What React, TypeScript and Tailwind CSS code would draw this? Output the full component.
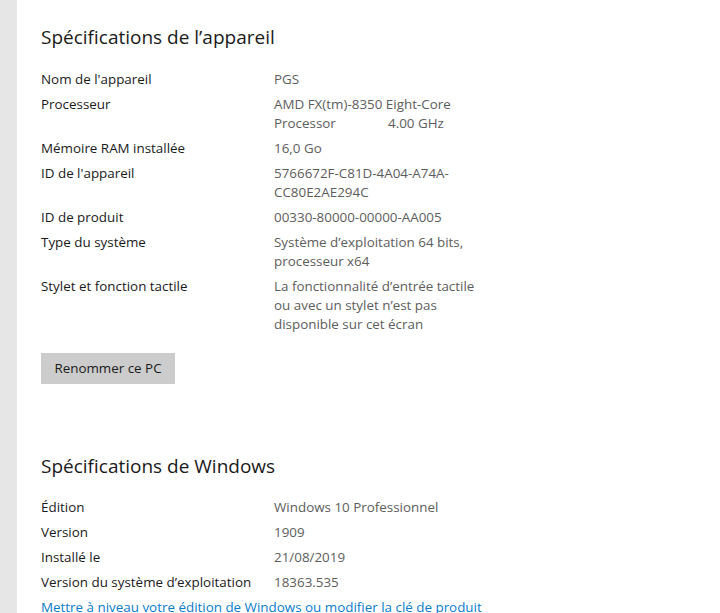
const deviceSpecs: [string, string][] = [
  ["Nom de l'appareil", "PGS"],
  ["Processeur", "AMD FX(tm)-8350 Eight-Core Processor               4.00 GHz"],
  ["Mémoire RAM installée", "16,0 Go"],
  ["ID de l'appareil", "5766672F-C81D-4A04-A74A-CC80E2AE294C"],
  ["ID de produit", "00330-80000-00000-AA005"],
  ["Type du système", "Système d’exploitation 64 bits, processeur x64"],
  ["Stylet et fonction tactile", "La fonctionnalité d’entrée tactile ou avec un stylet n’est pas disponible sur cet écran"],
]

const windowsSpecs: [string, string][] = [
  ["Édition", "Windows 10 Professionnel"],
  ["Version", "1909"],
  ["Installé le", "21/08/2019"],
  ["Version du système d’exploitation", "18363.535"],
]

const SpecList = ({ rows }: { rows: [string, string][] }) => (
  <div className="grid grid-cols-[233px_202px] gap-y-[6px] text-[13.4px] leading-[19px]">
    {rows.map(([label, value]) => (
      <div key={label} className="contents">
        <div className="text-[#1a1a1a]">{label}</div>
        <div className="text-[#5d5d5d] whitespace-pre-wrap break-words">{value}</div>
      </div>
    ))}
  </div>
)

export default function App() {
  return (
    <div
      className="w-[720px] h-[613px] flex bg-white overflow-hidden"
      style={{ fontFamily: '"Open Sans", "Noto Sans", sans-serif' }}
    >
      <div className="w-[17px] shrink-0 bg-[#e6e6e6]" />
      <div className="flex flex-col items-start pl-[24px] pt-[23px]">
        <h1 className="shrink-0 text-[19px] leading-[28px] text-[#1a1a1a] mb-[19px]">Spécifications de l’appareil</h1>
        <SpecList rows={deviceSpecs} />
        <button className="shrink-0 mt-[19px] w-[134px] h-[31px] bg-[#cccccc] text-[13.4px] text-[#1a1a1a]">
          Renommer ce PC
        </button>
        <h1 className="shrink-0 mt-[68px] text-[19px] leading-[28px] text-[#1a1a1a] mb-[18px]">Spécifications de Windows</h1>
        <SpecList rows={windowsSpecs} />
        <a className="shrink-0 mt-[6px] text-[13.4px] leading-[19px] text-[#0a7ccc] whitespace-nowrap" href="#">
          Mettre à niveau votre édition de Windows ou modifier la clé de produit
        </a>
      </div>
    </div>
  )
}
